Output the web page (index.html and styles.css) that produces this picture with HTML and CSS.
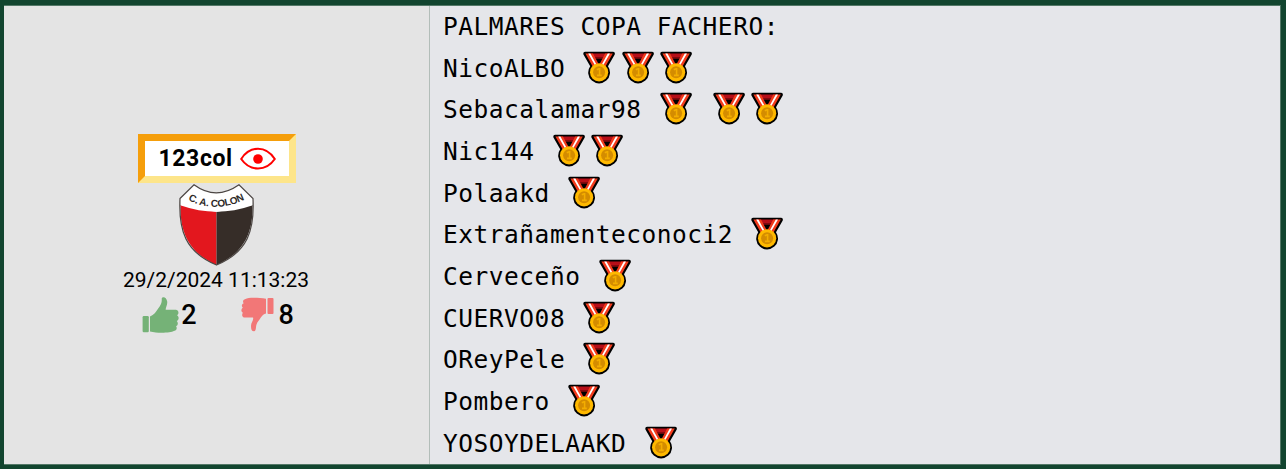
FILE: index.html
```html
<!DOCTYPE html>
<html lang="es">
<head>
<meta charset="utf-8">
<title>Palmares Copa Fachero</title>
<link rel="stylesheet" href="styles.css">
</head>
<body>
<svg class="defs" aria-hidden="true">
  <symbol id="medal" viewBox="0 0 38.1 34">
    <path d="M5 1.8H33.2Q35.6 2 34.6 4.8L28 16.2A10.9 10.9 0 1 1 10.2 16.2L3.6 4.8Q2.6 2 5 1.8Z" fill="#000"/>
    <path d="M9 3.6H29L26.6 7.8H11.6Z" fill="#b60e18"/>
    <path d="M11.4 7.8H26.8L25 9.8H13.4Z" fill="#65070a"/>
    <path d="M13.8 9H24.4L19.1 14.5Z" fill="#000"/>
    <path d="M5.4 3.4H13L18.6 14L12.6 16.2Z M32.8 3.4H25.2L19.6 14L25.6 16.2Z" fill="#f23b1c"/>
    <path d="M8.2 3.4H10.4L16.7 15H14.8Z M30 3.4H27.8L21.5 15H23.4Z" fill="#fff"/>
    <circle cx="19.1" cy="22.3" r="9.1" fill="#ffb900"/>
    <circle cx="19.1" cy="22.3" r="6" fill="#d48c00"/>
    <path d="M16.8 19.8L19 18.8H19.6V25M17 25.4H21.8" fill="none" stroke="#f3ad00" stroke-width="1.6"/>
  </symbol>
</svg>
<main class="post">
  <aside class="author">
    <div class="badge">
      <span>123col</span>
      <svg class="eye" viewBox="0 0 36 24">
        <path d="M1.2 12C10-1.7 26-1.7 34.8 12C26 24.7 10 24.7 1.2 12Z" fill="none" stroke="red" stroke-width="2"/>
        <circle cx="18" cy="12" r="4.8" fill="red"/>
      </svg>
    </div>
    <svg class="crest" viewBox="0 0 76 84">
      <path d="M2.5 22C2 47 9 69 38.5 82V29Z" fill="#e3171e"/>
      <path d="M74.5 22C75 47 68 69 38.5 82V29Z" fill="#362d28"/>
      <path d="M2 15.5L16 1.8Q38 18 61 1.8L75 15.5L74 22.5Q38.5 35 3 22.5Z" fill="#fff"/>
      <path d="M2 15.5L16 1.8Q38 18 61 1.8L75 15.5C76.5 47 70 69 38.5 82C7 69 .5 47 2 15.5Z" fill="none" stroke="#4b4542" stroke-width="1.2"/>
      <path id="crest-arc" d="M10 17Q38 31.5 69 15.5" fill="none"/>
      <text class="crest-name"><textPath href="#crest-arc" textLength="59">C. A. COLON</textPath></text>
    </svg>
    <time class="date">29/2/2024 11:13:23</time>
    <div class="votes">
      <div class="vote">
        <svg class="up" viewBox="0 0 37 38">
          <rect x=".6" y="20" width="6.2" height="16.2" rx="1.2"/>
          <path d="M8 20.5C12 19 14 16 16 12.8C19.5 8.5 20 6 19.7 2.5C20.5.2 24.5.8 25.2 5.5C25.6 9 23.5 11.5 23.7 13.8H34C37.2 14.5 37 18.2 35 19.2C37.4 20.5 37 24.2 34.8 25C36.5 26.7 36 29.4 34 30.2C35.4 31.5 34.8 34.5 32 35C29 36.6 17 37.7 8 35.5Z"/>
        </svg>
        <span>2</span>
      </div>
      <div class="vote">
        <svg class="down" viewBox="0 0 33 35">
          <rect x="26.5" y="1" width="6" height="16" rx="1"/>
          <path d="M25 1.8C17 .4 7 .3 4.5 2C1.8 2.5 1.5 5 2.7 6.2C.6 7.2.3 9.3 1.8 10.7C-.1 12-.1 14.8 1.9 15.8C.5 17.6 1 20.5 4 20.6H12C13 22.8 10 25.7 10 29C10 32.5 10.7 34.2 13 34.3C15.4 34 14.6 30.2 15.6 27.3C16.5 24.5 18.7 23 20 20.3C21.3 18.2 23 17 25 16.5Z"/>
        </svg>
        <span>8</span>
      </div>
    </div>
  </aside>
  <section class="message">
    <p>PALMARES COPA FACHERO:</p>
    <p>NicoALBO <svg class="medal"><use href="#medal"/></svg><svg class="medal"><use href="#medal"/></svg><svg class="medal"><use href="#medal"/></svg></p>
    <p>Sebacalamar98 <svg class="medal"><use href="#medal"/></svg> <svg class="medal"><use href="#medal"/></svg><svg class="medal"><use href="#medal"/></svg></p>
    <p>Nic144 <svg class="medal"><use href="#medal"/></svg><svg class="medal"><use href="#medal"/></svg></p>
    <p>Polaakd <svg class="medal"><use href="#medal"/></svg></p>
    <p>Extrañamenteconoci2 <svg class="medal"><use href="#medal"/></svg></p>
    <p>Cerveceño <svg class="medal"><use href="#medal"/></svg></p>
    <p>CUERVO08 <svg class="medal"><use href="#medal"/></svg></p>
    <p>OReyPele <svg class="medal"><use href="#medal"/></svg></p>
    <p>Pombero <svg class="medal"><use href="#medal"/></svg></p>
    <p>YOSOYDELAAKD <svg class="medal"><use href="#medal"/></svg></p>
  </section>
</main>
</body>
</html>
```
FILE: styles.css
```css
* { box-sizing: border-box; }
body {
  margin: 0;
  height: 469px;
  padding: 5px 5px 4px 4px;
  background: #12452f;
  overflow: hidden;
  color: #000;
}
.defs { display: none; }
.post {
  display: grid;
  grid-template-columns: 426px 1fr;
  height: 460px;
  border-top: 1px solid #537867;
  border-bottom: 1px solid #537867;
  border-right: 1px solid #537867;
}
.author {
  display: flex;
  flex-direction: column;
  align-items: center;
  padding-top: 128px;
  padding-right: 1px;
  background: #e4e4e4;
  border-right: 1px solid #b2bdb8;
  font-family: Roboto, sans-serif;
}
.badge {
  display: flex;
  align-items: center;
  gap: 8px;
  width: 158px;
  height: 49px;
  padding-left: 14px;
  margin-left: 1px;
  border: 7px solid;
  border-color: #f59e0b #fde58a #fde58a #f59e0b;
  background: #fff;
  font-size: 23px;
  letter-spacing: .6px;
  line-height: 32px;
  font-weight: 700;
}
.badge span { width: 73px; white-space: nowrap; }
.eye { width: 36px; height: 24px; flex: none; }
.crest { width: 76px; height: 84px; display: block; margin-right: 1px; }
.crest-name { font: 700 10px "Liberation Sans", sans-serif; fill: #2d2927; }
.date { font-size: 21px; line-height: 28px; margin-top: -1px; white-space: nowrap; }
.votes {
  display: flex;
  gap: 44px;
  margin-top: 1px;
  margin-left: 4px;
  font-size: 27px;
  font-weight: 500;
  line-height: 38px;
}
.vote { display: flex; align-items: center; gap: 2px; }
.vote span { padding-top: 1px; }
.up { width: 37px; height: 38px; fill: #75b277; }
.down { width: 33px; height: 35px; fill: #f27777; margin-right: 3px; }
.message {
  padding-left: 13px;
  background: #e5e6ea;
  font-family: "DejaVu Sans Mono", monospace;
  font-size: 24.5px;
  letter-spacing: .52px;
  line-height: 41.68px;
}
.message p { margin: 0; height: 41.68px; white-space: pre; }
.medal { width: 38.1px; height: 34px; vertical-align: -7px; }
```
